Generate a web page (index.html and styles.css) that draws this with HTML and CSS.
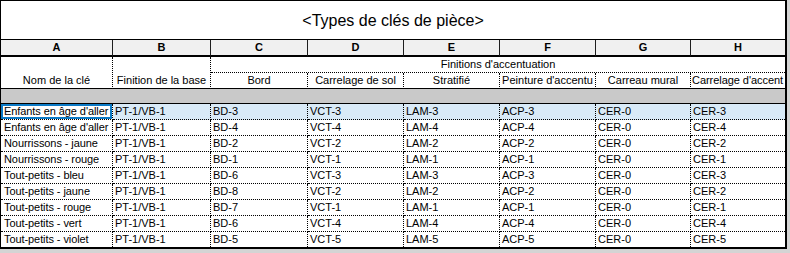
FILE: index.html
```html
<!DOCTYPE html>
<html lang="fr">
<head>
<meta charset="utf-8">
<title>Types de clés de pièce</title>
<link rel="stylesheet" href="styles.css">
</head>
<body>
<div class="sheet">
<table class="grid">
  <colgroup>
    <col class="c-a"><col class="c-b"><col class="c-c"><col class="c-d">
    <col class="c-e"><col class="c-f"><col class="c-g"><col class="c-h">
  </colgroup>
  <thead>
    <tr class="title-row"><th colspan="8" class="title">&lt;Types de clés de pièce&gt;</th></tr>
    <tr class="letters">
      <th>A</th><th>B</th><th>C</th><th>D</th><th>E</th><th>F</th><th>G</th><th class="last">H</th>
    </tr>
    <tr class="group-row">
      <th rowspan="2" class="name tall">Nom de la clé</th>
      <th rowspan="2" class="name tall">Finition de la base</th>
      <th colspan="6" class="group">Finitions d'accentuation</th>
    </tr>
    <tr class="names">
      <th class="name">Bord</th>
      <th class="name">Carrelage de sol</th>
      <th class="name">Stratifié</th>
      <th class="name">Peinture d'accentu</th>
      <th class="name">Carreau mural</th>
      <th class="name last">Carrelage d'accent</th>
    </tr>
    <tr class="band"><td colspan="8"></td></tr>
  </thead>
  <tbody>
    <tr class="row selected"><td class="active">Enfants en âge d'aller</td><td>PT-1/VB-1</td><td>BD-3</td><td>VCT-3</td><td>LAM-3</td><td>ACP-3</td><td>CER-0</td><td class="last">CER-3</td></tr>
    <tr class="row"><td>Enfants en âge d'aller</td><td>PT-1/VB-1</td><td>BD-4</td><td>VCT-4</td><td>LAM-4</td><td>ACP-4</td><td>CER-0</td><td class="last">CER-4</td></tr>
    <tr class="row"><td>Nourrissons - jaune</td><td>PT-1/VB-1</td><td>BD-2</td><td>VCT-2</td><td>LAM-2</td><td>ACP-2</td><td>CER-0</td><td class="last">CER-2</td></tr>
    <tr class="row"><td>Nourrissons - rouge</td><td>PT-1/VB-1</td><td>BD-1</td><td>VCT-1</td><td>LAM-1</td><td>ACP-1</td><td>CER-0</td><td class="last">CER-1</td></tr>
    <tr class="row"><td>Tout-petits - bleu</td><td>PT-1/VB-1</td><td>BD-6</td><td>VCT-3</td><td>LAM-3</td><td>ACP-3</td><td>CER-0</td><td class="last">CER-3</td></tr>
    <tr class="row"><td>Tout-petits - jaune</td><td>PT-1/VB-1</td><td>BD-8</td><td>VCT-2</td><td>LAM-2</td><td>ACP-2</td><td>CER-0</td><td class="last">CER-2</td></tr>
    <tr class="row"><td>Tout-petits - rouge</td><td>PT-1/VB-1</td><td>BD-7</td><td>VCT-1</td><td>LAM-1</td><td>ACP-1</td><td>CER-0</td><td class="last">CER-1</td></tr>
    <tr class="row"><td>Tout-petits - vert</td><td>PT-1/VB-1</td><td>BD-6</td><td>VCT-4</td><td>LAM-4</td><td>ACP-4</td><td>CER-0</td><td class="last">CER-4</td></tr>
    <tr class="row final"><td>Tout-petits - violet</td><td>PT-1/VB-1</td><td>BD-5</td><td>VCT-5</td><td>LAM-5</td><td>ACP-5</td><td>CER-0</td><td class="last">CER-5</td></tr>
  </tbody>
</table>
</div>
</body>
</html>
```
FILE: styles.css
```css
html, body {
  margin: 0;
  padding: 0;
}
body {
  background: #d4d4d4;
  width: 790px;
  height: 253px;
  overflow: hidden;
  font-family: "Liberation Sans", Arial, sans-serif;
  font-size: 11px;
  color: #000;
}
.sheet {
  width: 784px;
  background: #fff;
  border-left: 1px solid #000;
  border-top: 1px solid #000;
  border-right: 2px solid #000;
  border-bottom: 2px solid #000;
}
.grid {
  border-collapse: separate;
  border-spacing: 0;
  table-layout: fixed;
  width: 784px;
}
.c-a { width: 112px; }
.c-b { width: 98px; }
.c-c { width: 97px; }
.c-d { width: 96px; }
.c-e { width: 96px; }
.c-f { width: 96px; }
.c-g { width: 95px; }
.c-h { width: 94px; }

.grid th, .grid td {
  box-sizing: border-box;
  padding: 0;
  white-space: nowrap;
  overflow: hidden;
  text-overflow: clip;
  font-weight: normal;
  line-height: 15px;
}

.title {
  height: 39px;
  border-bottom: 1px solid #000;
  font-size: 16px;
  line-height: 38px;
  padding-top: 1px;
  text-align: center;
}

.letters th {
  height: 17px;
  background: #f0f0f0;
  font-weight: bold;
  text-align: center;
  border-right: 1px solid #1e1e1e;
  border-bottom: 2px solid #000;
  line-height: 15px;
}
.letters th.last { border-right: 0; }

.name {
  text-align: center;
  vertical-align: bottom;
  border-right: 1px dotted #000;
}
.name.last { border-right: 0; }
.tall {
  border-bottom: 1px solid #000;
  height: 32px;
}
.group {
  height: 16px;
  text-align: center;
  border-bottom: 1px dotted #000;
}
.names .name {
  height: 16px;
  border-bottom: 1px solid #000;
}
.names .name.last {
  text-align: left;
  padding-left: 1px;
  letter-spacing: -0.05px;
}

.band td {
  height: 15px;
  background: #c9c9c9;
  border-bottom: 1px solid #000;
}

.row td {
  height: 16px;
  padding-left: 2px;
  border-right: 1px dotted #000;
  border-bottom: 1px dotted #000;
}
.row td.last { border-right: 0; }
.row.final td { height: 15px; border-bottom: 0; }
.row td:first-child { padding-left: 3px; letter-spacing: -0.08px; }

.selected td {
  background: #d9eaf7;
}
.selected td.active {
  background: #fff;
  box-shadow: inset 0 0 0 2px #0b7ac6;
}
```
